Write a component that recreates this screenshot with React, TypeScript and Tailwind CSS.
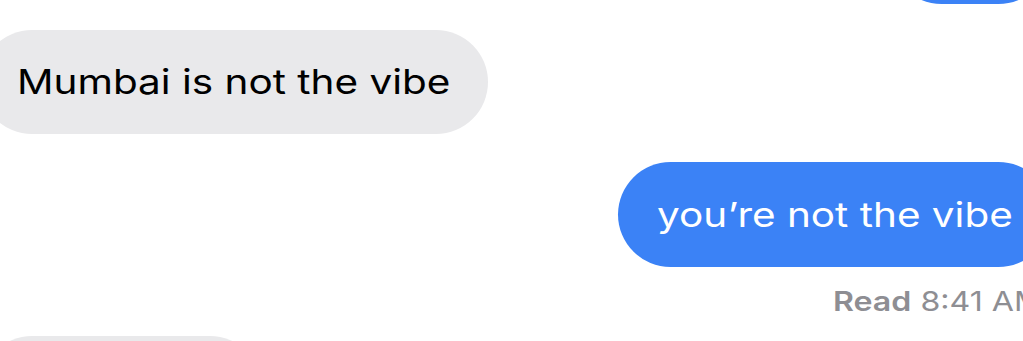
export default function App() {
  return (
    <div className="w-[1023px] h-[341px] overflow-hidden bg-white flex flex-col font-['Inter','Liberation_Sans',sans-serif]">
      {/* previous outgoing bubble, mostly scrolled off */}
      <div className="self-end -mt-[101px] -mr-[28px] h-[105px] w-[162px] shrink-0 rounded-full bg-[#3b82f6]" />

      <div className="self-start mt-[26px] -ml-[20px] h-[104px] w-[508px] shrink-0 rounded-full bg-[#e9e9eb] pl-[37px] flex items-center">
        <span className="inline-block origin-left scale-x-[1.19] text-[34px] leading-none text-black whitespace-nowrap">
          Mumbai is not the vibe
        </span>
      </div>

      <div className="self-end mt-[28px] -mr-[28px] h-[105px] w-[433px] shrink-0 rounded-full bg-[#3b82f6] pl-[39px] flex items-center">
        <span className="inline-block origin-left scale-x-[1.19] text-[34px] leading-none text-white whitespace-nowrap">
          you’re not the vibe
        </span>
      </div>

      <div className="self-end mt-[20px] -mr-[28px] w-[218px] text-[27px] leading-[30px] text-[#8e8e93] whitespace-nowrap">
        <span className="inline-block origin-left scale-x-[1.19]">
          <span className="font-semibold">Read</span> 8:41 AM
        </span>
      </div>

      <div className="self-start mt-[19px] -ml-[20px] h-[104px] w-[282px] shrink-0 rounded-full bg-[#e9e9eb]" />
    </div>
  );
}
